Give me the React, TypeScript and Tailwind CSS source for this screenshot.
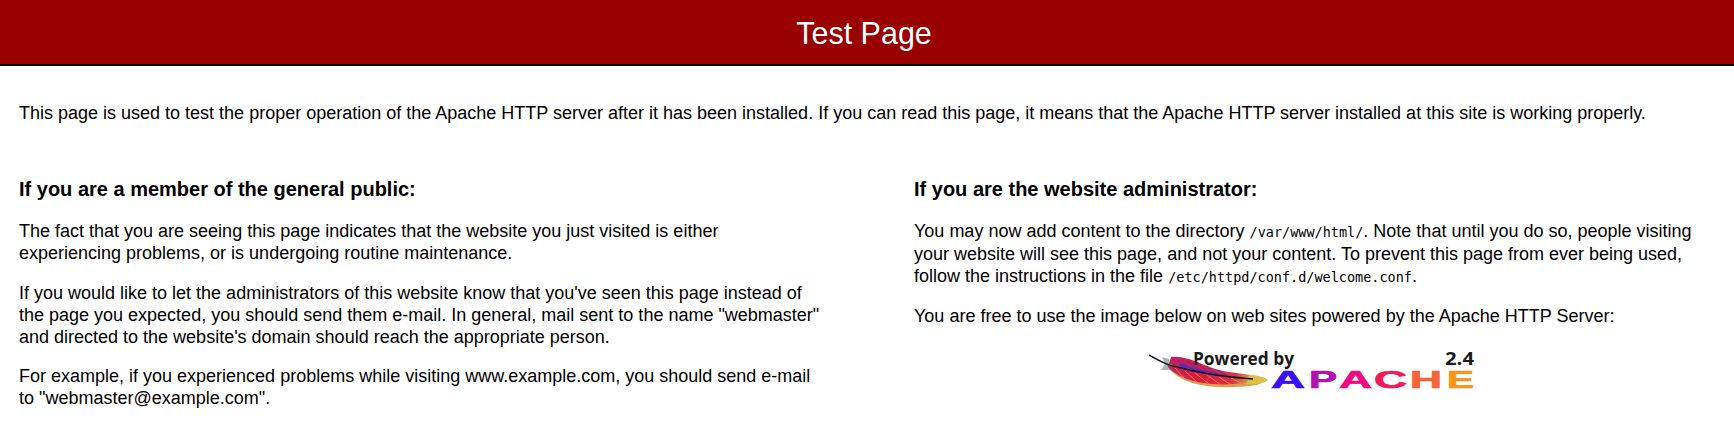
import React from 'react';

const mono = "font-['DejaVu_Sans_Mono',monospace] text-[13.5px]";

const upperRibs = [
  'M28 10 L42 18',
  'M38 11 L52 21',
  'M48 13 L62 24',
  'M58 17 L72 26',
  'M68 20 L82 28',
];

const lowerRibs = [
  'M26 18 L36 29',
  'M36 21 L48 32',
  'M46 23 L60 34',
  'M58 25 L72 35',
  'M70 27 L84 36',
  'M82 28 L96 35',
];

const PoweredBy: React.FC = () => (
  <svg width="326" height="46" viewBox="0 -2 326 46" className="block">
    <defs>
      <linearGradient id="feather" x1="0" y1="0" x2="1" y2="0">
        <stop offset="0" stopColor="#c02060" />
        <stop offset="0.45" stopColor="#e01e3c" />
        <stop offset="0.8" stopColor="#d8304a" />
        <stop offset="1" stopColor="#d8a040" />
      </linearGradient>
      <filter id="soft">
        <feGaussianBlur stdDeviation="0.4" />
      </filter>
    </defs>
    <g filter="url(#soft)">
      <path d="M13 7 L20 9 L22 20 L12 20 L16 14Z" fill="#a9b4b8" />
      <path d="M20 18 C26 27 40 33 52 35 C66 38 88 38 108 35 L119 30 L100 28 C70 26 40 20 20 14Z" fill="#d9a050" />
      <path d="M22 7 C34 6 46 11 58 16 C72 22 88 23 102 25 L102 28 C70 27 40 21 20 14Z" fill="url(#feather)" />
      <path d="M19 17 C26 25 40 31 54 33 C68 35 84 35 100 32 L100 28 C70 27 40 21 20 15Z" fill="url(#feather)" />
      <path d="M30 13 C46 17 66 25 92 27 C66 28 44 23 30 17Z" fill="#6a2aa8" />
      <path d="M100 25 C108 25 116 27 119 30 C114 34 106 35 98 34Z" fill="#dcc050" />
      {upperRibs.map((d) => (
        <path key={d} d={d} stroke="#7a2a9a" strokeWidth="1.2" />
      ))}
      {lowerRibs.map((d) => (
        <path key={d} d={d} stroke="#f08030" strokeWidth="1" />
      ))}
    </g>
    <path d="M0 5 C7 9 12 12 20 15 C42 21 70 27 104 29" fill="none" stroke="#111" strokeWidth="1.6" />
    <g fontFamily="'Open Sans',sans-serif" fontSize="18" fontWeight="700" fill="#1a1a1a">
      <text x="44" y="15" textLength="101" lengthAdjust="spacingAndGlyphs">Powered by</text>
      <text x="296" y="15" textLength="29" lengthAdjust="spacingAndGlyphs">2.4</text>
    </g>
    <g fontFamily="'Liberation Sans',sans-serif" fontSize="23" fontWeight="700" strokeWidth="0.7">
      <text x="122" y="38" fill="#3a10f0" stroke="#3a10f0" textLength="34" lengthAdjust="spacingAndGlyphs">A</text>
      <text x="160" y="38" fill="#b012b0" stroke="#b012b0" textLength="28" lengthAdjust="spacingAndGlyphs">P</text>
      <text x="190" y="38" fill="#f00a80" stroke="#f00a80" textLength="33" lengthAdjust="spacingAndGlyphs">A</text>
      <text x="225" y="38" fill="#f01a5a" stroke="#f01a5a" textLength="33" lengthAdjust="spacingAndGlyphs">C</text>
      <text x="261" y="38" fill="#f7643a" stroke="#f7643a" textLength="32" lengthAdjust="spacingAndGlyphs">H</text>
      <text x="298" y="38" fill="#fa9418" stroke="#fa9418" textLength="27" lengthAdjust="spacingAndGlyphs">E</text>
    </g>
  </svg>
);

const App: React.FC = () => {
  return (
    <div className="h-[426px] overflow-hidden bg-white font-['Liberation_Sans',Arial,sans-serif] text-[18px] leading-[22px] text-black">
      <header className="h-[66px] border-b-2 border-black bg-[#990000] pr-[6px] text-center text-[30.5px] leading-[67px] text-white">
        Test Page
      </header>
      <main className="px-[19px]">
        <p className="pt-[36px]">
          This page is used to test the proper operation of the Apache HTTP server after it has been installed. If you can read this page, it means that the Apache HTTP server installed at this site is working properly.
        </p>
        <div className="mt-[54px] flex">
          <section className="w-[895px] pr-[88px]">
            <h2 className="text-[20px] font-bold leading-[22px]">If you are a member of the general public:</h2>
            <p className="mt-[20px]">
              The fact that you are seeing this page indicates that the website you just visited is either<br />experiencing problems, or is undergoing routine maintenance.
            </p>
            <p className="mt-[18px]">
              If you would like to let the administrators of this website know that you've seen this page instead of the page you expected, you should send them e-mail. In general, mail sent to the name "webmaster" and directed to the website's domain should reach the appropriate person.
            </p>
            <p className="mt-[17px]">
              For example, if you experienced problems while visiting www.example.com, you should send e-mail<br />to "webmaster@example.com".
            </p>
          </section>
          <section className="flex-1">
            <h2 className="text-[20px] font-bold leading-[22px]">If you are the website administrator:</h2>
            <p className="mt-[20px]">
              You may now add content to the directory <code className={mono}>/var/www/html/</code>. Note that until you do so, people visiting your website will see this page, and not your content. To prevent this page from ever being used, follow the instructions in the file <code className={mono}>/etc/httpd/conf.d/welcome.conf</code>.
            </p>
            <p className="mt-[17px]">You are free to use the image below on web sites powered by the Apache HTTP Server:</p>
            <div className="mt-[21px] flex justify-center pr-[6px]">
              <PoweredBy />
            </div>
          </section>
        </div>
      </main>
    </div>
  );
};

export default App;
